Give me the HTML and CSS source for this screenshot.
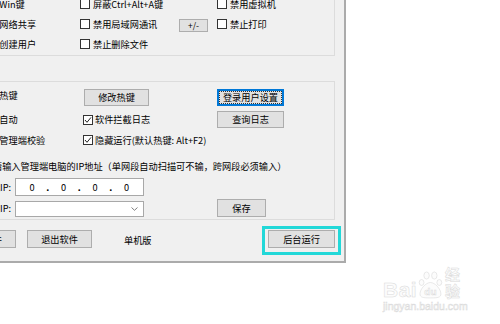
FILE: index.html
```html
<!DOCTYPE html>
<html lang="zh-CN">
<head>
<meta charset="utf-8">
<title>设置</title>
<link rel="stylesheet" href="styles.css">
</head>
<body>
<div class="win">
  <div class="grp g1">
    <span class="lbl">禁用Win键</span>
    <label class="chk"><span class="cb"></span>屏蔽Ctrl+Alt+A键</label>
    <span></span>
    <label class="chk"><span class="cb"></span>禁用虚拟机</label>

    <span class="lbl">禁用网络共享</span>
    <label class="chk"><span class="cb"></span>禁用局域网通讯</label>
    <button class="btn pm">+/-</button>
    <label class="chk"><span class="cb"></span>禁止打印</label>

    <span class="lbl">禁止创建用户</span>
    <label class="chk"><span class="cb"></span>禁止删除文件</label>
  </div>

  <div class="grp g2">
    <div class="r ra">
      <span class="lbl top">设置热键</span>
      <button class="btn w65">修改热键</button>
      <button class="btn w67 focus"><span class="ft">登录用户设置</span></button>
    </div>
    <div class="r rb">
      <span class="lbl">开机自动</span>
      <label class="chk c2"><span class="cb on"><svg width="8" height="8" viewBox="0 0 8 8"><polyline points="1,4 3,6.3 7,1.4" fill="none" stroke="#222" stroke-width="1"/></svg></span>软件拦截日志</label>
      <button class="btn w67">查询日志</button>
    </div>
    <div class="r rc">
      <span class="lbl">启用管理端校验</span>
      <label class="chk c2 span2"><span class="cb on"><svg width="8" height="8" viewBox="0 0 8 8"><polyline points="1,4 3,6.3 7,1.4" fill="none" stroke="#222" stroke-width="1"/></svg></span>隐藏运行(默认热键: Alt+F2)</label>
    </div>
    <div class="rd">请输入管理端电脑的IP地址（单网段自动扫描可不输，跨网段必须输入）</div>
    <div class="re">
      <span class="iplbl">本机IP:</span>
      <div class="ipbox">
        <span class="oct">0</span><span class="dot">.</span><span class="oct">0</span><span class="dot">.</span><span class="oct">0</span><span class="dot">.</span><span class="oct">0</span>
      </div>
    </div>
    <div class="rf">
      <span class="iplbl">管理IP:</span>
      <div class="combo"><svg width="7" height="4" viewBox="0 0 7 4"><polyline points="0.5,0.5 3.5,3.3 6.5,0.5" fill="none" stroke="#707070" stroke-width="0.9"/></svg></div>
      <button class="btn w49 save">保存</button>
    </div>
  </div>

  <div class="bot">
    <button class="btn w65">关于软件</button>
    <button class="btn w65 exit">退出软件</button>
    <span class="mode">单机版</span>
    <div class="hl"><button class="btn w67">后台运行</button></div>
  </div>
</div>

<div class="wm">
  <div class="wm-top">
    <span class="wm-bai">Bai</span>
    <svg class="paw" width="25" height="29" viewBox="0 0 25 29">
      <ellipse cx="3.6" cy="12.5" rx="2.4" ry="3"/>
      <ellipse cx="8.6" cy="5.5" rx="2.7" ry="3.6"/>
      <ellipse cx="16.4" cy="5.5" rx="2.7" ry="3.6"/>
      <ellipse cx="21.4" cy="12.5" rx="2.4" ry="3"/>
      <path d="M12.5 12.5 C8 12.5 2 19 2 24 C2 27.5 5 28 12.5 28 C20 28 23 27.5 23 24 C23 19 17 12.5 12.5 12.5Z"/>
      <text x="12.5" y="25.5" text-anchor="middle">du</text>
    </svg>
    <span class="wm-jy">经验</span>
  </div>
  <div class="wm-url">jingyan.baidu.com</div>
</div>
</body>
</html>
```

FILE: styles.css
```css
* { box-sizing: border-box; }
html, body { margin: 0; padding: 0; }
body {
  width: 500px;
  height: 324px;
  overflow: hidden;
  background: #fff;
  font-family: "Noto Sans CJK SC", "Microsoft YaHei", sans-serif;
  font-size: 9.2px;
  line-height: 13px;
  color: #000;
}

.win {
  width: 406px;
  margin-left: -60px;
  margin-top: -20px;
  padding: 8px 0 13px;
  background: #f0f0f0;
  border-right: 2px solid #ababab;
  border-bottom: 2px solid #ababab;
}

.grp {
  margin-left: 10px;
  width: 385px;
  border: 1px solid #dcdcdc;
}

.g1 {
  display: grid;
  grid-template-columns: 99px 99px 38px 1fr;
  grid-auto-rows: 20px;
  align-items: center;
  padding: 5px 0 1px 30px;
}

.lbl { white-space: nowrap; }
.lbl.top { align-self: start; }

.chk {
  display: flex;
  align-items: center;
  gap: 3px;
  white-space: nowrap;
}
.chk.c2 { gap: 2px; }
.span2 { grid-column: 2 / 4; }

.cb {
  width: 10px;
  height: 10px;
  flex: none;
  border: 1px solid #333;
  background: #fff;
  display: flex;
  align-items: center;
  justify-content: center;
}

.btn {
  height: 18px;
  padding: 0;
  margin: 0;
  background: #e1e1e1;
  border: 1px solid #adadad;
  border-radius: 0;
  font: inherit;
  color: #000;
  display: flex;
  align-items: center;
  justify-content: center;
  white-space: nowrap;
}
.w65 { width: 65px; }
.w67 { width: 67px; }
.w49 { width: 49px; }

.pm {
  width: 29px;
  height: 13px;
  align-self: end;
  margin-bottom: 2px;
  font-size: 8.5px;
}

.focus {
  position: relative;
  border-color: #0078d7;
  box-shadow: inset 0 0 0 1px #0078d7;
}
.focus::before {
  content: "";
  position: absolute;
  inset: 1px;
  border: 1px dotted #333;
}
.ft { position: relative; }

.g2 {
  margin-top: 25px;
  padding: 7px 0 2px 30px;
  display: flex;
  flex-direction: column;
}
.r {
  display: grid;
  grid-template-columns: 102px 134px 1fr;
  align-items: center;
}
.ra { height: 17px; margin-bottom: 5px; }
.ra .btn, .rb .btn { height: 17px; }
.ra .w65 { margin-left: 1px; }
.rb { height: 17px; margin-bottom: 2px; }
.rc { height: 20px; margin-bottom: 6px; }
.rd {
  height: 20px;
  margin-bottom: 2px;
  padding-left: 12px;
  display: flex;
  align-items: center;
  white-space: nowrap;
}
.re, .rf {
  display: flex;
  align-items: center;
  height: 18px;
}
.re { margin-bottom: 3px; }
.iplbl {
  width: 30px;
  text-align: right;
  white-space: nowrap;
  margin-right: 4px;
}
.ipbox {
  width: 129px;
  height: 18px;
  background: #fff;
  border: 1px solid #a8a8a8;
  display: flex;
  align-items: center;
  padding-left: 3px;
}
.oct { width: 26px; text-align: center; }
.dot { width: 5.5px; text-align: center; font-weight: bold; }

.combo {
  width: 129px;
  height: 16px;
  align-self: end;
  background: #fff;
  border: 1px solid #a8a8a8;
  display: flex;
  align-items: center;
  justify-content: flex-end;
  padding-right: 5px;
}
.save { margin-left: 73px; }

.bot {
  display: flex;
  align-items: center;
  height: 18px;
  margin-top: 10px;
  padding: 0 9px 0 11px;
}
.exit { margin-left: 11px; }
.mode { margin-left: 32px; padding-top: 2px; }
.hl {
  position: relative;
  margin-left: auto;
}
.hl::after {
  content: "";
  position: absolute;
  top: -4px;
  left: -6px;
  right: -6px;
  bottom: -7px;
  border: 3px solid #22d8d8;
}

.wm {
  margin: 7px 0 0 383px;
  width: 92px;
  color: #fcfcfc;
  -webkit-text-stroke: 0.5px #dadada;
}
.wm-top {
  display: flex;
  align-items: flex-end;
  height: 29px;
}
.wm-bai {
  font-family: "Liberation Sans", Arial, sans-serif;
  font-weight: bold;
  font-size: 21px;
  line-height: 18px;
  letter-spacing: 0.5px;
}
.paw {
  margin-left: 1px;
  fill: #fcfcfc;
  stroke: #dadada;
  stroke-width: 0.6;
}
.paw text {
  font-family: "Liberation Sans", Arial, sans-serif;
  font-weight: bold;
  font-size: 10px;
  fill: #fcfcfc;
  stroke: #dadada;
  stroke-width: 0.5;
}
.wm-jy {
  margin-left: 2px;
  font-size: 15px;
  line-height: 17px;
  font-weight: bold;
}
.wm-url {
  font-family: "Liberation Sans", Arial, sans-serif;
  font-size: 10.5px;
  line-height: 13px;
  margin-top: 1px;
}
```
